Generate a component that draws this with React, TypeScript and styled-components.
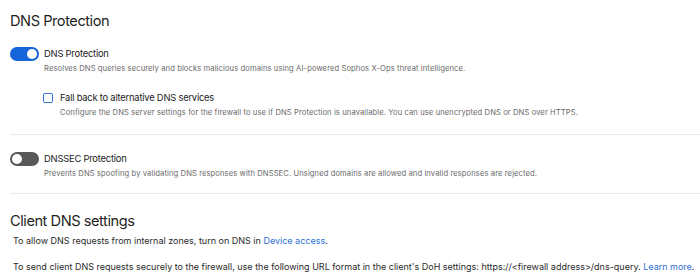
import React from "react";
import styled, { createGlobalStyle } from "styled-components";

const Global = createGlobalStyle`
  html, body { margin: 0; padding: 0; background: #fff; }
  body { font-family: Inter, "Noto Sans", sans-serif; color: #222; }
`;

const Page = styled.div`
  padding: 11px 0 0 10px;
  width: 690px;
`;

const Heading = styled.h2`
  margin: 0;
  font-size: 14.6px;
  font-weight: 400;
  line-height: 20px;
  color: #1f1f1f;
  letter-spacing: -0.45px;
`;

const Section = styled.div<{ $top: number; $bottom: number }>`
  padding-top: ${(p) => p.$top}px;
  padding-bottom: ${(p) => p.$bottom}px;
`;

const Row = styled.div`
  display: flex;
  align-items: flex-start;
  gap: 5px;
`;

const Texts = styled.div`
  display: flex;
  flex-direction: column;
`;

const Label = styled.div`
  font-size: 9.4px;
  line-height: 14px;
  letter-spacing: -0.22px;
  color: #222;
`;

const Desc = styled.div`
  margin-top: 2px;
  font-size: 7.6px;
  line-height: 12px;
  letter-spacing: 0.1px;
  color: #6a6a6a;
  white-space: nowrap;
`;

const Track = styled.div<{ $on: boolean }>`
  position: relative;
  flex: none;
  width: 29px;
  height: 14px;
  border-radius: 7px;
  background: ${(p) => (p.$on ? "#1565d8" : "#595959")};
`;

const Knob = styled.div<{ $on: boolean }>`
  position: absolute;
  top: 2px;
  left: ${(p) => (p.$on ? 17 : 2)}px;
  width: 10px;
  height: 10px;
  border-radius: 50%;
  background: #fff;
`;

const SubRow = styled.div`
  display: flex;
  align-items: flex-start;
  gap: 7px;
  margin: 16px 0 0 33px;
`;

const Box = styled.div`
  flex: none;
  margin-top: 2px;
  width: 8px;
  height: 8px;
  border: 1.3px solid #3a6fd6;
  border-radius: 2px;
`;

const Divider = styled.hr`
  margin: 0;
  border: none;
  border-top: 1px solid #e8e8e8;
`;

const Para = styled.p<{ $top: number }>`
  margin: ${(p) => p.$top}px 0 0 3px;
  font-size: 9px;
  line-height: 14px;
  letter-spacing: 0;
  color: #2a2a2a;
  white-space: nowrap;
`;

const Link = styled.a`
  color: #2d6fd8;
  text-decoration: none;
`;

const Toggle = ({ on }: { on: boolean }) => (
  <Track $on={on}>
    <Knob $on={on} />
  </Track>
);

export default function App() {
  return (
    <>
      <Global />
      <Page>
        <Heading>DNS Protection</Heading>
        <Section $top={16} $bottom={15}>
          <Row>
            <Toggle on />
            <Texts>
              <Label>DNS Protection</Label>
              <Desc>
                Resolves DNS queries securely and blocks malicious domains using AI-powered Sophos X-Ops threat
                intelligence.
              </Desc>
            </Texts>
          </Row>
          <SubRow>
            <Box />
            <Texts>
              <Label>Fall back to alternative DNS services</Label>
              <Desc>
                Configure the DNS server settings for the firewall to use if DNS Protection is unavailable. You can
                use unencrypted DNS or DNS over HTTPS.
              </Desc>
            </Texts>
          </SubRow>
        </Section>
        <Divider />
        <Section $top={17} $bottom={13}>
          <Row>
            <Toggle on={false} />
            <Texts>
              <Label>DNSSEC Protection</Label>
              <Desc>
                Prevents DNS spoofing by validating DNS responses with DNSSEC. Unsigned domains are allowed and
                invalid responses are rejected.
              </Desc>
            </Texts>
          </Row>
        </Section>
        <Divider />
        <Section $top={17} $bottom={0}>
          <Heading>Client DNS settings</Heading>
          <Para $top={3}>
            To allow DNS requests from internal zones, turn on DNS in <Link>Device access</Link>.
          </Para>
          <Para $top={12}>
            To send client DNS requests securely to the firewall, use the following URL format in the client's DoH
            settings: https://&lt;firewall address&gt;/dns-query. <Link>Learn more</Link>.
          </Para>
        </Section>
      </Page>
    </>
  );
}
